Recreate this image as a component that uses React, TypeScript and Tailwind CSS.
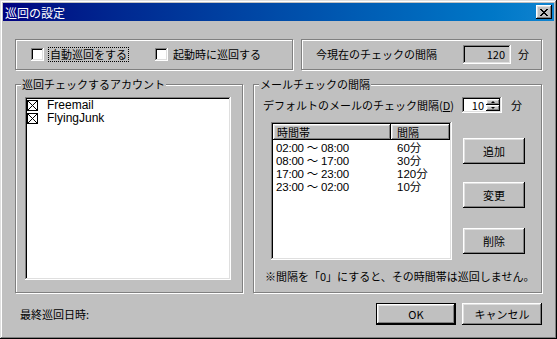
import type { ReactNode } from "react";

const raised =
  "shadow-[inset_-1px_-1px_#000,inset_1px_1px_#fff,inset_-2px_-2px_#808080,inset_2px_2px_#dfdfdf]";
const sunken =
  "shadow-[inset_-1px_-1px_#fff,inset_1px_1px_#808080,inset_-2px_-2px_#dfdfdf,inset_2px_2px_#000]";
const etched = "border border-[#808080] shadow-[inset_1px_1px_#fff,1px_1px_#fff]";
// 行の詰まったリストは欧文フォントを先頭に（行高13pxに収める）
const rowFont = "font-['Liberation_Sans','Noto_Sans_CJK_JP',sans-serif]";

function GroupBox({
  label,
  className,
  children,
}: {
  label?: string;
  className: string;
  children: ReactNode;
}) {
  return (
    <div className={`relative ${etched} ${className}`}>
      {label && (
        <span className="absolute -top-[8px] left-[5px] bg-[#c0c0c0] px-[1px] leading-[14px]">
          {label}
        </span>
      )}
      {children}
    </div>
  );
}

function CheckBox() {
  return <span className={`h-[13px] w-[13px] shrink-0 bg-white ${sunken}`} />;
}

function Button({ label, className = "" }: { label: string; className?: string }) {
  return (
    <button
      type="button"
      className={`flex items-center justify-center bg-[#c0c0c0] ${raised} ${className}`}
    >
      {label}
    </button>
  );
}

function CrossBox() {
  return (
    <svg width="11" height="11" viewBox="0 0 11 11" className="shrink-0" shapeRendering="crispEdges">
      <rect x="0.5" y="0.5" width="10" height="10" fill="#fff" stroke="#000" />
      <path d="M1 1L10 10M10 1L1 10" stroke="#000" />
    </svg>
  );
}

const ranges = [
  ["02:00 ～ 08:00", "60分"],
  ["08:00 ～ 17:00", "30分"],
  ["17:00 ～ 23:00", "120分"],
  ["23:00 ～ 02:00", "10分"],
];

export default function App() {
  return (
    <div
      className={`flex h-[339px] w-[557px] flex-col bg-[#c0c0c0] p-[3px] font-['Noto_Sans_CJK_JP',sans-serif] text-[11px] leading-[13px] text-black shadow-[inset_-1px_-1px_#000,inset_1px_1px_#dfdfdf,inset_-2px_-2px_#808080,inset_2px_2px_#fff]`}
    >
      {/* タイトルバー */}
      <div className="flex h-[18px] items-center bg-gradient-to-r from-[#000080] to-[#1084d0] pl-[2px] pr-[2px]">
        <span className="text-[12px] text-white">巡回の設定</span>
        <button
          type="button"
          className={`ml-auto flex h-[14px] w-[16px] items-center justify-center bg-[#c0c0c0] ${raised}`}
        >
          <svg width="8" height="7" viewBox="0 0 8 7" shapeRendering="crispEdges">
            <path d="M0 0h2v1h-2zM6 0h2v1h-2zM1 1h2v1h-2zM5 1h2v1h-2zM2 2h4v1h-4zM3 3h2v1h-2zM2 4h4v1h-4zM1 5h2v1h-2zM5 5h2v1h-2zM0 6h2v1h-2zM6 6h2v1h-2z" fill="#000" />
          </svg>
        </button>
      </div>

      <div className="flex flex-1 flex-col px-[12px] pt-[18px]">
        <div className="flex gap-[8px]">
          <GroupBox className="flex h-[31px] w-[278px] items-center pl-[15px]">
            <div className="flex w-[124px] items-center gap-[4px]">
              <CheckBox />
              <span className="border border-dotted border-black px-[1px] leading-[13px]">
                自動巡回をする
              </span>
            </div>
            <div className="flex items-center gap-[5px]">
              <CheckBox />
              <span>起動時に巡回する</span>
            </div>
          </GroupBox>
          <GroupBox className="flex h-[31px] w-[241px] items-center pl-[14px]">
            <span>今現在のチェックの間隔</span>
            <div className={`ml-auto flex h-[19px] w-[48px] items-center justify-end pr-[6px] ${sunken}`}>
              120
            </div>
            <span className="ml-[7px] mr-[12px]">分</span>
          </GroupBox>
        </div>

        <div className="mt-[14px] flex gap-[10px]">
          <GroupBox label="巡回チェックするアカウント" className="h-[209px] w-[228px] pb-[12px] pl-[9px] pr-[11px] pt-[12px]">
            <div className={`flex h-full flex-col bg-white p-[2px] ${sunken}`}>
              {["Freemail", "FlyingJunk"].map((name) => (
                <div key={name} className="flex h-[13px] items-center gap-[9px]">
                  <CrossBox />
                  <span className={`${rowFont} text-[12px] leading-[13px]`}>{name}</span>
                </div>
              ))}
            </div>
          </GroupBox>

          <GroupBox label="メールチェックの間隔" className="flex h-[209px] w-[289px] flex-col pl-[9px] pt-[12px]">
            <div className="flex h-[16px] items-center">
              <span>デフォルトのメールのチェック間隔(<span className="underline">D</span>)</span>
              <div className={`ml-auto flex h-[16px] w-[40px] items-center bg-white py-[2px] pl-[2px] pr-[2px] ${sunken}`}>
                <span className="flex-1 pr-[2px] text-right">10</span>
                <div className="flex h-full w-[14px] flex-col">
                  {["M2 0L4 2H0Z", "M0 0H4L2 2Z"].map((d) => (
                    <span key={d} className={`flex flex-1 items-center justify-center bg-[#c0c0c0] ${raised}`}>
                      <svg width="4" height="2" viewBox="0 0 4 2">
                        <path d={d} fill="#000" />
                      </svg>
                    </span>
                  ))}
                </div>
              </div>
              <span className="ml-[9px] mr-[19px]">分</span>
            </div>

            <div className="mt-[9px] flex">
              <div className={`ml-[8px] flex h-[138px] w-[181px] flex-col bg-white p-[2px] ${sunken}`}>
                <div className="flex h-[16px]">
                  <div className={`flex w-[118px] items-center bg-[#c0c0c0] pl-[4px] ${raised}`}>時間帯</div>
                  <div className={`flex w-[59px] items-center bg-[#c0c0c0] pl-[6px] ${raised}`}>間隔</div>
                </div>
                <div className={`pt-[2px] ${rowFont}`}>
                  {ranges.map(([time, gap]) => (
                    <div key={time} className="flex h-[13px] items-center leading-[13px]">
                      <span className="w-[118px] pl-[3px] text-[11.5px] tracking-[-0.2px]">{time}</span>
                      <span className="pl-[6px] text-[11.5px]">{gap}</span>
                    </div>
                  ))}
                </div>
              </div>
              <div className="ml-[11px] flex flex-col pt-[16px]">
                <Button label="追加" className="h-[26px] w-[62px]" />
                <Button label="変更" className="mt-[18px] h-[26px] w-[62px]" />
                <Button label="削除" className="mt-[20px] h-[26px] w-[62px]" />
              </div>
            </div>

            <div className="mt-[10px] pl-[2px]">※間隔を「0」にすると、その時間帯は巡回しません。</div>
          </GroupBox>
        </div>

        <div className="mt-[10px] flex items-center">
          <span className="pl-[5px]">最終巡回日時:</span>
          <button
            type="button"
            className="ml-auto h-[22px] w-[80px] border border-black bg-[#c0c0c0]"
          >
            <span className={`flex h-full w-full items-center justify-center ${raised}`}>OK</span>
          </button>
          <Button label="キャンセル" className="ml-[6px] h-[22px] w-[80px]" />
        </div>
      </div>
    </div>
  );
}
